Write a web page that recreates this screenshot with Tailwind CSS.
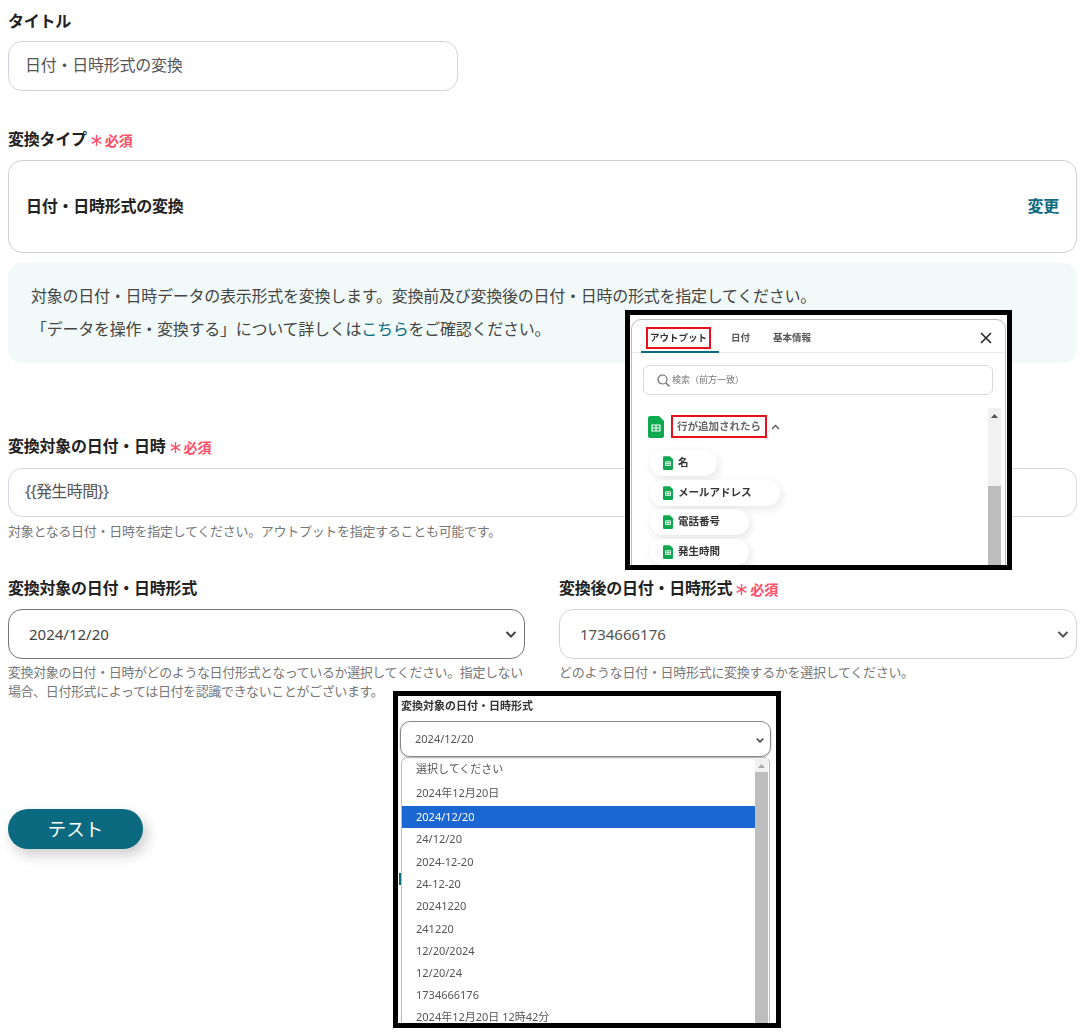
<!DOCTYPE html>
<html lang="ja">
<head>
  <meta charset="UTF-8">
  <title>日付・日時形式の変換</title>
  <script src="https://cdn.jsdelivr.net/npm/@tailwindcss/browser@4"></script>
</head>
<body class="bg-white font-['Noto_Sans','Noto_Sans_CJK_JP',sans-serif] text-[#333]">
  <div class="relative w-[1091px] h-[1036px] overflow-hidden">
    <div class="pl-2 pr-[14px] pt-3">

      <!-- タイトル -->
      <div class="h-[18px] flex items-center text-[16px] tracking-[-0.25px] font-bold text-[#222]">タイトル</div>
      <div class="mt-[11px] w-[450px] h-[50px] pb-[2px] flex items-center px-4 border border-[#d3d5dc] rounded-[14px] text-[16px] tracking-[-0.25px] text-[#555]">日付・日時形式の変換</div>

      <!-- 変換タイプ -->
      <div class="mt-10 h-[18px] pb-[2px] flex items-center gap-1 text-[16px] tracking-[-0.25px] font-bold text-[#222]">
        <span>変換タイプ</span>
        <span class="flex items-center gap-[3px] text-[14px] tracking-normal font-bold text-[#ff4d67] pt-[2px]">
          <svg width="11" height="11" viewBox="0 0 9 9" stroke="#ff4d67" stroke-width="1.1"><path d="M4.5 0v9M.6 2.2l7.800 4.600M.6 6.800l7.800-4.600"/></svg>必須
        </span>
      </div>
      <div class="mt-[11px] h-[93px] flex items-center justify-between pl-[17px] pr-[17px] pb-[2px] border border-[#d0d0d4] rounded-[14px] text-[16px] tracking-[-0.25px] font-bold text-[#222]">
        <span>日付・日時形式の変換</span>
        <span class="text-[#0b6a80]">変更</span>
      </div>
      <div class="mt-[10px] h-[100px] pl-[23px] pt-[17px] bg-[#f1faf9] rounded-[14px] text-[16px] tracking-[-0.25px] leading-[33px] text-[#444]">
        <p>対象の日付・日時データの表示形式を変換します。変換前及び変換後の日付・日時の形式を指定してください。</p>
        <p>「データを操作・変換する」について詳しくは<span class="text-[#0b6a80]">こちら</span>をご確認ください。</p>
      </div>

      <!-- 変換対象の日付・日時 -->
      <div class="mt-[75px] h-[18px] pb-[2px] flex items-center gap-1 text-[16px] tracking-[-0.25px] font-bold text-[#222]">
        <span>変換対象の日付・日時</span>
        <span class="flex items-center gap-[3px] text-[14px] tracking-normal font-bold text-[#ff4d67] pt-[2px]">
          <svg width="11" height="11" viewBox="0 0 9 9" stroke="#ff4d67" stroke-width="1.1"><path d="M4.5 0v9M.6 2.2l7.800 4.600M.6 6.800l7.800-4.600"/></svg>必須
        </span>
      </div>
      <div class="mt-3 h-[49px] pb-[3px] flex items-center px-4 border border-[#d3d8e0] rounded-[14px] text-[16px] tracking-[-0.6px] text-[#555]">{{発生時間}}</div>
      <p class="mt-[5px] text-[13px] tracking-[-0.3px] leading-[19px] text-[#777]">対象となる日付・日時を指定してください。アウトプットを指定することも可能です。</p>

      <!-- 形式 -->
      <div class="mt-[38px] grid grid-cols-[517px_518px] gap-x-[34px]">
        <div>
          <div class="h-[18px] flex items-center text-[16px] tracking-[-0.25px] font-bold text-[#222]">変換対象の日付・日時形式</div>
          <div class="mt-3 h-[50px] flex items-center justify-between pl-5 pr-[5px] border border-[#767676] rounded-[14px] text-[15px] text-[#444]">
            <span>2024/12/20</span>
            <svg class="w-[16px] h-[16px]" viewBox="0 0 16 16" fill="none" stroke="#444" stroke-width="2"><path d="M3.5 6l4.500 4.500L12.500 6"/></svg>
          </div>
          <p class="mt-1 text-[13px] tracking-[-0.4px] leading-[19px] text-[#777]">変換対象の日付・日時がどのような日付形式となっているか選択してください。指定しない<br>場合、日付形式によっては日付を認識できないことがございます。</p>
        </div>
        <div>
          <div class="h-[18px] flex items-center gap-1 text-[16px] tracking-[-0.25px] font-bold text-[#222]">
            <span>変換後の日付・日時形式</span>
            <span class="flex items-center gap-[3px] text-[14px] tracking-normal font-bold text-[#ff4d67] pt-[2px]">
              <svg width="11" height="11" viewBox="0 0 9 9" stroke="#ff4d67" stroke-width="1.1"><path d="M4.5 0v9M.6 2.2l7.800 4.600M.6 6.800l7.800-4.600"/></svg>必須
            </span>
          </div>
          <div class="mt-3 h-[50px] flex items-center justify-between pl-5 pr-[5px] border border-[#d3d5dc] rounded-[14px] text-[15px] text-[#555]">
            <span>1734666176</span>
            <svg class="w-[16px] h-[16px]" viewBox="0 0 16 16" fill="none" stroke="#555" stroke-width="2"><path d="M3.5 6l4.500 4.500L12.500 6"/></svg>
          </div>
          <p class="mt-1 text-[13px] tracking-[-0.3px] leading-[19px] text-[#777]">どのような日付・日時形式に変換するかを選択してください。</p>
        </div>
      </div>

      <!-- テスト -->
      <button class="mt-[108px] w-[135px] h-10 pb-[1px] rounded-full bg-[#0b6a80] text-white text-[18.500px] shadow-[4px_6px_14px_rgba(0,0,0,0.2)]">テスト</button>
    </div>

    <!-- 貼り付け画像: アウトプット -->
    <div class="absolute left-[625px] top-[310px] w-[387px] h-[260px] border-[5px] border-black bg-white overflow-hidden text-[#555]">
      <div class="mx-[1px] mt-[4px] h-[300px] border border-[#bbb] rounded-t-[10px] blur-[0.4px]">
        <div class="relative h-[33px] pt-[4px] flex items-center border-b border-[#e8eaee] text-[9.500px] font-bold">
          <span class="ml-[14px] w-[65px] h-[22px] flex items-center justify-center border-[2.500px] border-[#e8101c] text-[#333]">アウトプット</span>
          <span class="ml-[20px]">日付</span>
          <span class="ml-[23px]">基本情報</span>
          <svg class="absolute left-[348px] top-[12px]" width="12" height="12" viewBox="0 0 12 12" stroke="#222" stroke-width="1.500"><path d="M1 1l10 10M11 1L1 11"/></svg>
          <div class="absolute left-[9px] bottom-[-1px] w-[78px] h-[2px] bg-[#0b6a80]"></div>
        </div>
        <div class="ml-[11px] mt-3 w-[350px] h-[30px] flex items-center pl-[13px] gap-[2px] border border-[#d9dbe0] rounded-[6px] text-[9px] text-[#777]">
          <svg width="13" height="13" viewBox="0 0 13 13" fill="none" stroke="#666" stroke-width="1.200"><circle cx="5.500" cy="5.500" r="4.500"/><path d="M9 9l3.500 3.500"/></svg>
          <span>検索（前方一致）</span>
        </div>
        <div class="mt-5 ml-[16px] h-[23px] flex items-center">
          <svg width="16" height="22" viewBox="0 0 16 22"><path d="M2 0h9l5 5v15a2 2 0 0 1-2 2H2a2 2 0 0 1-2-2V2a2 2 0 0 1 2-2z" fill="#0ea84f"/><path d="M4 9h8v6H4zM4 12h8M8 9v6" fill="none" stroke="#fff" stroke-width="1.100"/></svg>
          <span class="ml-[7px] w-[96px] h-[23px] flex items-center justify-center border-[2.500px] border-[#e8101c] text-[10.500px] font-bold text-[#666]">行が追加されたら</span>
          <svg class="ml-[4px]" width="9" height="6" viewBox="0 0 9 6" fill="none" stroke="#555" stroke-width="1.300"><path d="M1 5l3.500-3.500L8 5"/></svg>
        </div>
        <div class="ml-[18px] mt-3 flex flex-col items-start gap-[3.500px] text-[10.500px] font-bold text-[#333]">
          <div class="w-[67px] h-[26px] flex items-center pl-[13px] gap-[5px] rounded-full bg-white shadow-[2px_3px_10px_rgba(0,0,0,0.1)]">
            <svg width="10" height="14" viewBox="0 0 16 22"><path d="M2 0h9l5 5v15a2 2 0 0 1-2 2H2a2 2 0 0 1-2-2V2a2 2 0 0 1 2-2z" fill="#0ea84f"/><path d="M4 9h8v6H4zM4 12h8M8 9v6" fill="none" stroke="#fff" stroke-width="1.300"/></svg>名
          </div>
          <div class="w-[130px] h-[26px] flex items-center pl-[13px] gap-[5px] rounded-full bg-white shadow-[2px_3px_10px_rgba(0,0,0,0.1)]">
            <svg width="10" height="14" viewBox="0 0 16 22"><path d="M2 0h9l5 5v15a2 2 0 0 1-2 2H2a2 2 0 0 1-2-2V2a2 2 0 0 1 2-2z" fill="#0ea84f"/><path d="M4 9h8v6H4zM4 12h8M8 9v6" fill="none" stroke="#fff" stroke-width="1.300"/></svg>メールアドレス
          </div>
          <div class="w-[99px] h-[26px] flex items-center pl-[13px] gap-[5px] rounded-full bg-white shadow-[2px_3px_10px_rgba(0,0,0,0.1)]">
            <svg width="10" height="14" viewBox="0 0 16 22"><path d="M2 0h9l5 5v15a2 2 0 0 1-2 2H2a2 2 0 0 1-2-2V2a2 2 0 0 1 2-2z" fill="#0ea84f"/><path d="M4 9h8v6H4zM4 12h8M8 9v6" fill="none" stroke="#fff" stroke-width="1.300"/></svg>電話番号
          </div>
          <div class="w-[99px] h-[26px] flex items-center pl-[13px] gap-[5px] rounded-full bg-white shadow-[2px_3px_10px_rgba(0,0,0,0.1)]">
            <svg width="10" height="14" viewBox="0 0 16 22"><path d="M2 0h9l5 5v15a2 2 0 0 1-2 2H2a2 2 0 0 1-2-2V2a2 2 0 0 1 2-2z" fill="#0ea84f"/><path d="M4 9h8v6H4zM4 12h8M8 9v6" fill="none" stroke="#fff" stroke-width="1.300"/></svg>発生時間
          </div>
        </div>
      </div>
      <!-- スクロールバー -->
      <div class="absolute left-[358px] top-[93px] w-[13px] h-[170px] bg-[#f1f1f1]">
        <svg class="mx-auto mt-[6px]" width="7" height="4" viewBox="0 0 7 4" fill="#555"><path d="M3.500 0L7 4H0z"/></svg>
        <div class="mt-[68px] h-[90px] bg-[#bdbdbd]"></div>
      </div>
    </div>

    <!-- 貼り付け画像: プルダウン -->
    <div class="absolute left-[393px] top-[691px] w-[388px] h-[337px] border-[5px] border-black bg-white overflow-hidden text-[11px] text-[#555]">
      <div class="blur-[0.4px]">
        <div class="h-[19px] pl-[3px] pt-[1px] flex items-center text-[11px] font-bold text-[#333]">変換対象の日付・日時形式</div>
        <div class="ml-[2px] mt-[6px] w-[371px] h-[36px] pt-[1px] flex items-center justify-between pl-[14px] pr-[4px] border border-[#888] rounded-[10px] shadow-[0_1px_2px_rgba(0,0,0,0.25)]">
          <span>2024/12/20</span>
          <svg width="12" height="12" viewBox="0 0 16 16" fill="none" stroke="#444" stroke-width="2.200"><path d="M3.500 6l4.500 4.500L12.500 6"/></svg>
        </div>
        <div class="relative ml-[3px] w-[369px] h-[300px] border-x border-t border-[#bbb] rounded-t-[6px]">
          <div class="w-[353px]">
            <div class="h-[22px] pl-[14px] flex items-center">選択してください</div>
            <div class="h-[26px] pl-[14px] flex items-center">2024年12月20日</div>
            <div class="h-[22px] pl-[14px] flex items-center bg-[#1a66d3] text-white">2024/12/20</div>
            <div class="h-[22.200px] pl-[14px] pt-[1px] flex items-center">24/12/20</div>
            <div class="h-[22.200px] pl-[14px] pt-[1px] flex items-center">2024-12-20</div>
            <div class="h-[22.200px] pl-[14px] pt-[1px] flex items-center">24-12-20</div>
            <div class="h-[22.200px] pl-[14px] pt-[2px] flex items-center">20241220</div>
            <div class="h-[22.200px] pl-[14px] pt-[2px] flex items-center">241220</div>
            <div class="h-[22.200px] pl-[14px] pt-[2px] flex items-center">12/20/2024</div>
            <div class="h-[22.200px] pl-[14px] pt-[2px] flex items-center">12/20/24</div>
            <div class="h-[22.200px] pl-[14px] pt-[2px] flex items-center">1734666176</div>
            <div class="h-[22.200px] pl-[14px] pt-[2px] flex items-center">2024年12月20日 12時42分</div>
          </div>
          <div class="absolute right-[1px] top-0 w-[13px] h-full bg-[#f1f1f1]">
            <svg class="mx-auto mt-[6px]" width="7" height="4" viewBox="0 0 7 4" fill="#aaa"><path d="M3.500 0L7 4H0z"/></svg>
            <div class="mt-[4px] h-[290px] bg-[#bdbdbd]"></div>
          </div>
        </div>
      </div>
      <!-- 切り抜きに写り込んだテストボタンの端 -->
      <div class="absolute left-[1px] top-[177px] w-[2px] h-[12px] bg-[#0b6a80]"></div>
    </div>
  </div>
</body>
</html>
